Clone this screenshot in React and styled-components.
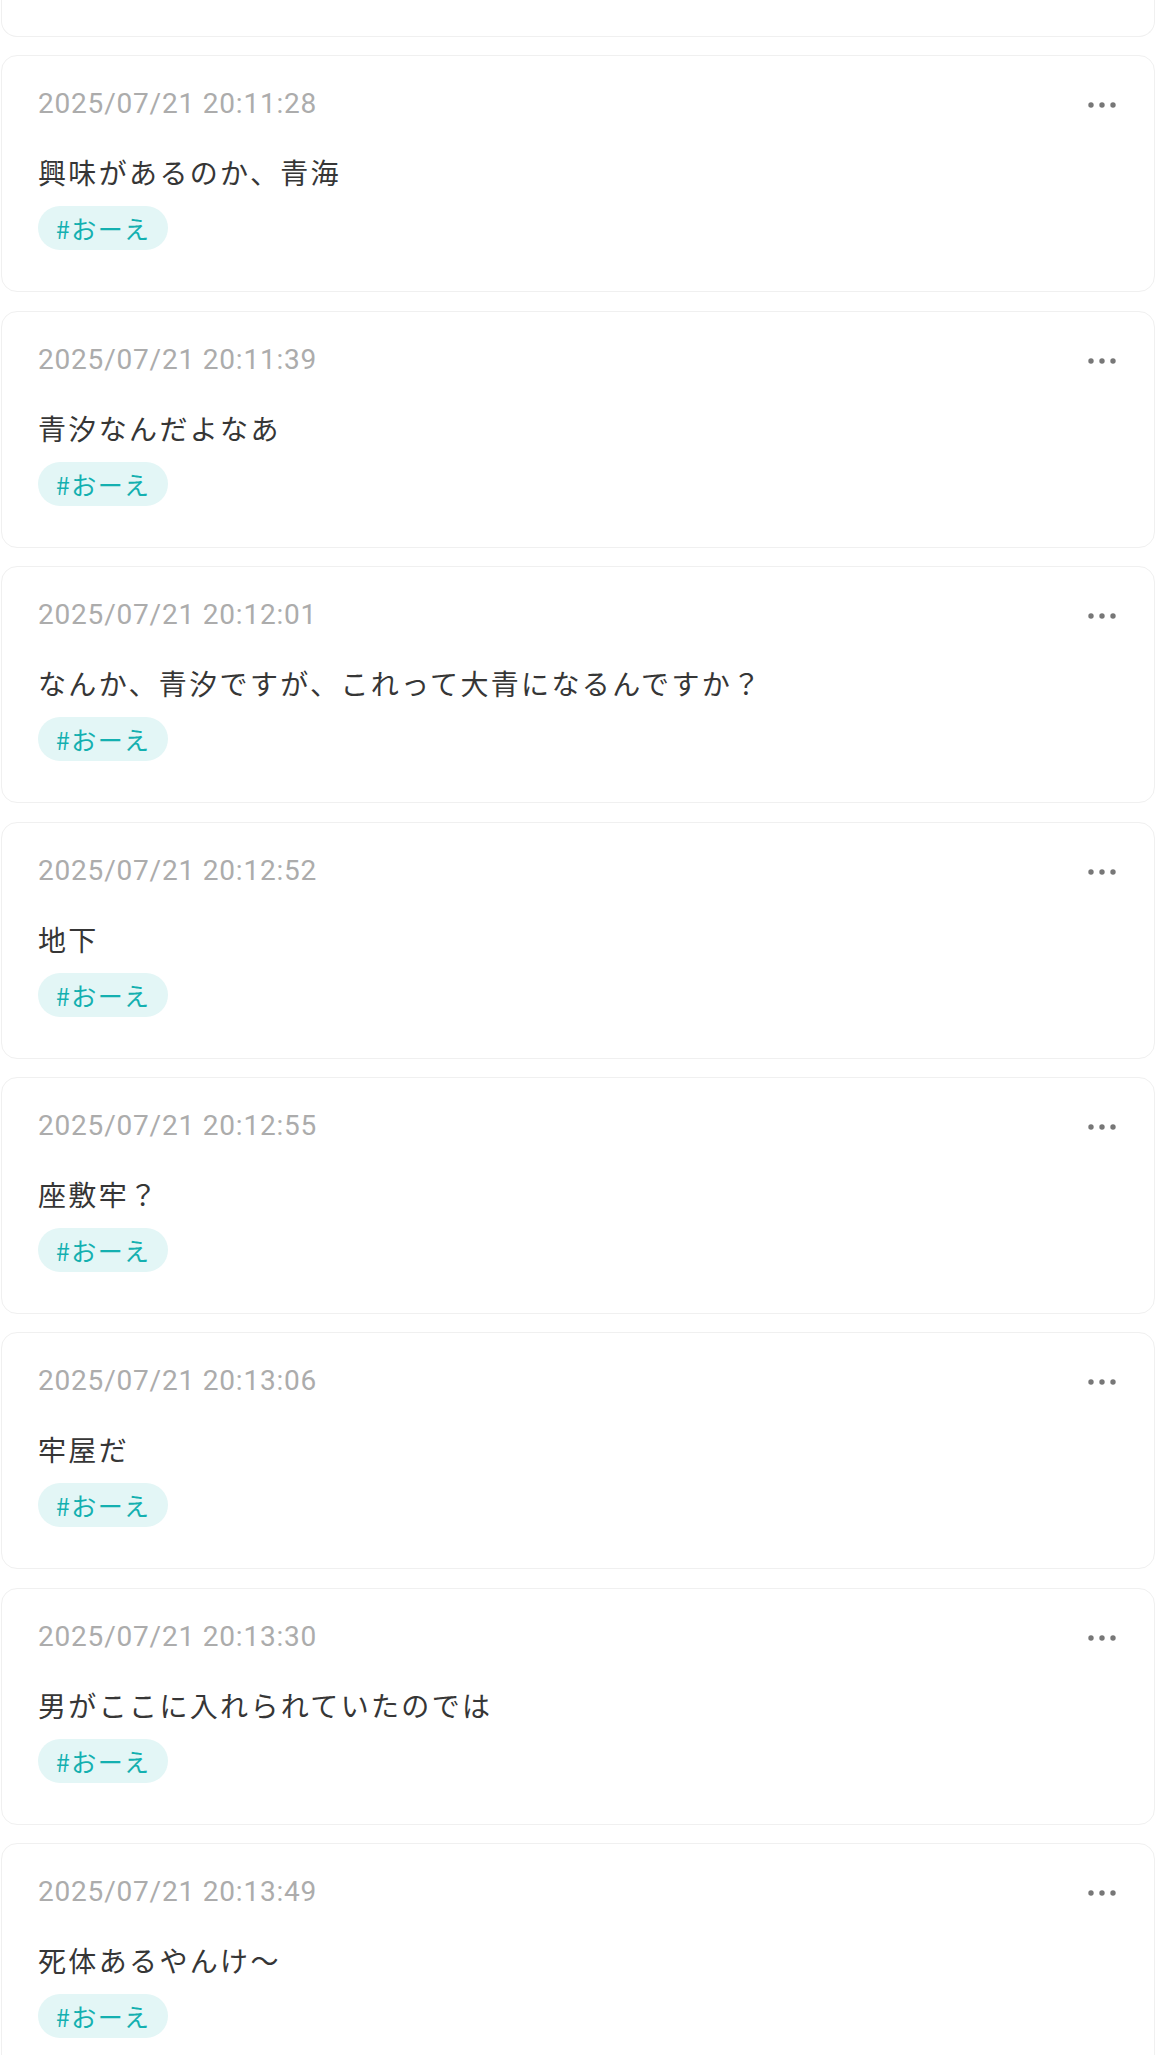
import styled, { createGlobalStyle } from "styled-components";

const GlobalStyle = createGlobalStyle`
  html, body {
    margin: 0;
    padding: 0;
    background: #ffffff;
  }
  body {
    font-family: "Roboto", "Noto Sans CJK JP", sans-serif;
  }
`;

const List = styled.div`
  display: flex;
  flex-direction: column;
  gap: 18.4px;
  padding: 0 1px;
`;

const Card = styled.div`
  background: #ffffff;
  border: 1px solid #f0f0f0;
  border-radius: 16px;
  padding: 27px 38px 41px 36px;
`;

// the card above, scrolled mostly out of view
const CutCard = styled.div`
  height: 36px;
  background: #ffffff;
  border: 1px solid #f0f0f0;
  border-top: none;
  border-radius: 0 0 16px 16px;
`;

const CardHeader = styled.div`
  display: flex;
  align-items: center;
  justify-content: space-between;
  height: 42px;
`;

const Time = styled.span`
  font-family: "Roboto", sans-serif;
  font-size: 28px;
  line-height: 42px;
  color: #acacac;
  letter-spacing: 0.8px;
`;

const MoreButton = styled.button`
  display: flex;
  align-items: center;
  padding: 0;
  border: none;
  background: none;
  cursor: pointer;
  margin-top: 2px;
`;

const Body = styled.p`
  margin: 26px 0 13px;
  font-family: "Noto Sans CJK JP", sans-serif;
  font-size: 28px;
  line-height: 42px;
  letter-spacing: 2.35px;
  color: #363636;
`;

const Tag = styled.span`
  display: inline-flex;
  align-items: center;
  height: 44px;
  padding: 0 18px;
  border-radius: 22px;
  background: #e3f6f6;
  color: #14b0b0;
  font-family: "Noto Sans CJK JP", sans-serif;
  font-size: 25px;
  letter-spacing: 1.4px;
`;

const posts = [
  { time: "2025/07/21 20:11:28", text: "興味があるのか、青海" },
  { time: "2025/07/21 20:11:39", text: "青汐なんだよなあ" },
  { time: "2025/07/21 20:12:01", text: "なんか、青汐ですが、これって大青になるんですか？" },
  { time: "2025/07/21 20:12:52", text: "地下" },
  { time: "2025/07/21 20:12:55", text: "座敷牢？" },
  { time: "2025/07/21 20:13:06", text: "牢屋だ" },
  { time: "2025/07/21 20:13:30", text: "男がここに入れられていたのでは" },
  { time: "2025/07/21 20:13:49", text: "死体あるやんけ〜" },
];

const Dots = () => (
  <svg width="28" height="6" viewBox="0 0 28 6">
    <circle cx="3" cy="3" r="2.7" fill="#777777" />
    <circle cx="14" cy="3" r="2.7" fill="#777777" />
    <circle cx="25" cy="3" r="2.7" fill="#777777" />
  </svg>
);

const App = () => {
  return (
    <>
      <GlobalStyle />
      <List>
        <CutCard />
        {posts.map((post) => (
          <Card key={post.time}>
            <CardHeader>
              <Time>{post.time}</Time>
              <MoreButton aria-label="more">
                <Dots />
              </MoreButton>
            </CardHeader>
            <Body>{post.text}</Body>
            <Tag>#おーえ</Tag>
          </Card>
        ))}
      </List>
    </>
  );
};

export default App;
